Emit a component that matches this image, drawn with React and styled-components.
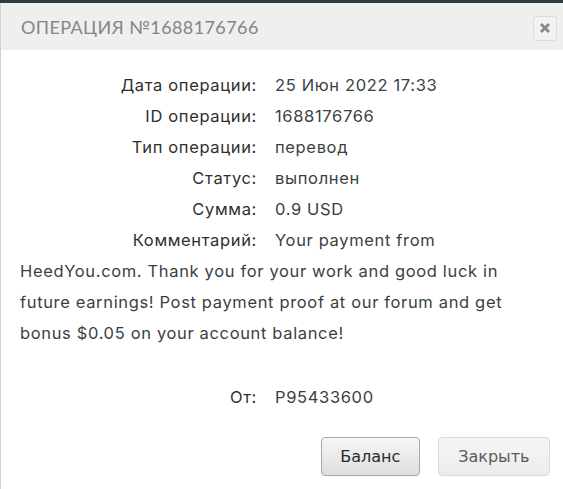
import React from "react";
import styled, { createGlobalStyle } from "styled-components";

const Global = createGlobalStyle`
  html, body { margin: 0; padding: 0; background: #ffffff; }
  body { font-family: Inter, "Noto Sans", sans-serif; }
`;

const TopStrip = styled.div`
  height: 3px;
  background: #2d3b43;
`;

const Modal = styled.div`
  border-left: 1px solid #d2d2d2;
  min-height: 486px;
  display: flex;
  flex-direction: column;
`;

const Header = styled.div`
  height: 47px;
  background: #efefef;
  display: flex;
  align-items: center;
  justify-content: space-between;
  padding: 0 6px 0 20px;
`;

const Title = styled.h3`
  margin: 0;
  font-family: Lato, "Open Sans", sans-serif;
  font-weight: 400;
  font-size: 18px;
  letter-spacing: 0.4px;
  color: #858585;
  text-transform: uppercase;
`;

const CloseButton = styled.button`
  width: 24px;
  height: 25px;
  padding: 0;
  border: 1px solid #dcdcdc;
  border-radius: 3px;
  background: #f2f2f2;
  display: flex;
  align-items: center;
  justify-content: center;
  margin-top: 3px;
`;

const Body = styled.div`
  padding: 20px 20px 0 19px;
  font-family: Inter, "Noto Sans", sans-serif;
  font-size: 16.5px;
  letter-spacing: 0.65px;
  line-height: 31px;
  color: #333;
`;

const Row = styled.div`
  margin-top: ${(p) => (p.$gap ? "33px" : "0")};
  max-width: ${(p) => (p.$wrap ? "490px" : "none")};
`;

const Label = styled.span`
  display: inline-block;
  width: 237px;
  text-align: right;
  margin-right: 18px;
  color: #2f2f2f;
`;

const Value = styled.span`
  color: #3a3f44;
`;

const Footer = styled.div`
  display: flex;
  justify-content: flex-end;
  gap: 18px;
  padding: 24px 13px 0 0;
`;

const Button = styled.button`
  height: 39px;
  padding: 0 ${(p) => (p.$primary ? "18.5px" : "19.5px")};
  border-radius: 4px;
  font-family: "DejaVu Sans", Verdana, sans-serif;
  font-size: 16px;
  cursor: pointer;
  border: 1px solid ${(p) => (p.$primary ? "#a8a8a8" : "#dadada")};
  color: ${(p) => (p.$primary ? "#2b2b2b" : "#5a5a5a")};
  background: ${(p) =>
    p.$primary
      ? "linear-gradient(#f6f6f6, #dedede)"
      : "linear-gradient(#f5f5f5, #ececec)"};
`;

const rows = [
  ["Дата операции:", "25 Июн 2022 17:33"],
  ["ID операции:", "1688176766"],
  ["Тип операции:", "перевод"],
  ["Статус:", "выполнен"],
  ["Сумма:", "0.9 USD"],
];

export default function App() {
  return (
    <>
      <Global />
      <TopStrip />
      <Modal>
        <Header>
          <Title>Операция №1688176766</Title>
          <CloseButton aria-label="close">
            <svg width="12" height="12" viewBox="0 0 12 12">
              <path d="M2 2 L10 10 M10 2 L2 10" stroke="#8a8a8a" strokeWidth="3" strokeLinecap="butt" />
            </svg>
          </CloseButton>
        </Header>
        <Body>
          {rows.map(([l, v]) => (
            <Row key={l}>
              <Label>{l}</Label>
              <Value>{v}</Value>
            </Row>
          ))}
          <Row $wrap>
            <Label>Комментарий:</Label>
            <Value>
              Your payment from HeedYou.com. Thank you for your work and good luck in future
              earnings! Post payment proof at our forum and get bonus $0.05 on your account
              balance!
            </Value>
          </Row>
          <Row $gap>
            <Label>От:</Label>
            <Value>P95433600</Value>
          </Row>
        </Body>
        <Footer>
          <Button $primary>Баланс</Button>
          <Button>Закрыть</Button>
        </Footer>
      </Modal>
    </>
  );
}
